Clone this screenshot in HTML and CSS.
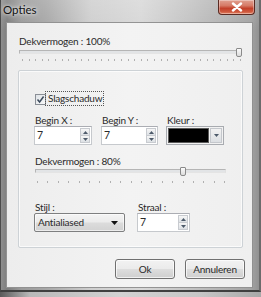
FILE: index.html
```html
<!DOCTYPE html>
<html>
<head>
<meta charset="utf-8">
<link rel="stylesheet" href="styles.css">
</head>
<body>
<div class="window">
  <div class="titlebar">
    <span class="title">Opties</span>
    <div class="close">
      <svg width="12" height="10" viewBox="0 0 12 10"><path d="M2 1.5 L10 8.5 M10 1.5 L2 8.5" stroke="#fff" stroke-width="2.4" stroke-linecap="round"/></svg>
    </div>
  </div>
  <div class="client">
    <div class="label">Dekvermogen : 100%</div>
    <div class="slider slider-wide">
      <div class="track"></div>
      <div class="thumb" style="left: 217px"></div>
      <div class="ticks"></div>
    </div>

    <div class="group">
      <div class="check-row">
        <span class="checkbox">
          <svg width="9" height="9" viewBox="0 0 9 9"><path d="M1.5 4.5 L3.6 7 L7.6 1.5" fill="none" stroke="#3b4a5c" stroke-width="1.5"/></svg>
        </span>
        <span class="check-label">Slagschaduw</span>
      </div>

      <div class="row-grid">
        <div class="field">
          <div class="flabel">Begin X :</div>
          <div class="spin spin-x">
            <span class="val">7</span>
            <span class="spin-btns">
              <span class="sb"><svg width="5" height="3" viewBox="0 0 5 3"><path d="M0 3 L2.5 0 L5 3Z" fill="#4d5a6a"/></svg></span>
              <span class="sb"><svg width="5" height="3" viewBox="0 0 5 3"><path d="M0 0 L2.5 3 L5 0Z" fill="#4d5a6a"/></svg></span>
            </span>
          </div>
        </div>
        <div class="field">
          <div class="flabel">Begin Y :</div>
          <div class="spin spin-y">
            <span class="val">7</span>
            <span class="spin-btns">
              <span class="sb"><svg width="5" height="3" viewBox="0 0 5 3"><path d="M0 3 L2.5 0 L5 3Z" fill="#4d5a6a"/></svg></span>
              <span class="sb"><svg width="5" height="3" viewBox="0 0 5 3"><path d="M0 0 L2.5 3 L5 0Z" fill="#4d5a6a"/></svg></span>
            </span>
          </div>
        </div>
        <div class="field">
          <div class="flabel">Kleur :</div>
          <div class="color-pick">
            <span class="swatch"></span>
            <span class="color-btn"><svg width="5" height="3" viewBox="0 0 5 3"><path d="M0 0 L2.5 3 L5 0Z" fill="#4d5a6a"/></svg></span>
          </div>
        </div>
      </div>

      <div class="label label-inner">Dekvermogen : 80%</div>
      <div class="slider slider-inner">
        <div class="track"></div>
        <div class="thumb" style="left: 145px"></div>
        <div class="ticks"></div>
      </div>

      <div class="row-grid2">
        <div class="field">
          <div class="flabel">Stijl :</div>
          <div class="combo">
            <span class="combo-text">Antialiased</span>
            <svg width="7" height="4" viewBox="0 0 7 4"><path d="M0 0 L3.5 4 L7 0Z" fill="#111"/></svg>
          </div>
        </div>
        <div class="field">
          <div class="flabel">Straal :</div>
          <div class="spin spin-r">
            <span class="val">7</span>
            <span class="spin-btns">
              <span class="sb"><svg width="5" height="3" viewBox="0 0 5 3"><path d="M0 3 L2.5 0 L5 3Z" fill="#4d5a6a"/></svg></span>
              <span class="sb"><svg width="5" height="3" viewBox="0 0 5 3"><path d="M0 0 L2.5 3 L5 0Z" fill="#4d5a6a"/></svg></span>
            </span>
          </div>
        </div>
      </div>
    </div>

    <div class="buttons">
      <button class="btn">Ok</button>
      <button class="btn">Annuleren</button>
    </div>
  </div>
</div>
</body>
</html>
```

FILE: styles.css
```css
html, body {
  margin: 0;
  padding: 0;
}
body {
  width: 261px;
  height: 297px;
  overflow: hidden;
  background: linear-gradient(to right, #5a5a5a 0, #b9b9b9 30px, #d2d2d2 120px, #c6c6c6 200px, #a8a8a8 261px);
  font-family: "Lato", "Open Sans", sans-serif;
  font-size: 10px;
  letter-spacing: -0.2px;
  color: #2a2a2a;
}
.window {
  width: 261px;
  height: 292px;
  box-sizing: border-box;
  border-left: 1px solid #4b4b4b;
  border-right: 2px solid #6b6b6b;
  border-bottom: 2px solid #3f3f3f;
  background:
    linear-gradient(to bottom, rgba(255,255,255,0.15), rgba(255,255,255,0) 30px),
    linear-gradient(to right, #8e8e8e 0, #7d7d7d 6px, #9a9a9a 20px, #a7a7a7 45px, #cfcfcf 90px, #d8d8d8 140px, #c2c2c2 190px, #b1b1b1 225px, #a3a3a3 250px, #8b8b8b 261px);
}
.titlebar {
  height: 22px;
  display: flex;
  align-items: flex-start;
}
.title {
  padding-left: 2px;
  padding-top: 3px;
  font-size: 11.5px;
  letter-spacing: 0;
  line-height: 14px;
  color: #111;
  text-shadow: 0 0 6px rgba(255,255,255,0.9), 0 0 3px rgba(255,255,255,0.8);
}
.close {
  margin-left: auto;
  margin-right: 4px;
  width: 37px;
  height: 15px;
  box-sizing: border-box;
  border: 1px solid #5a2a22;
  border-top: none;
  border-radius: 0 0 4px 4px;
  background: linear-gradient(to bottom, #e0a090 0, #d67a66 40%, #c2402a 60%, #cf5a3e 85%, #e58b6c 100%);
  box-shadow: inset 0 0 0 1px rgba(255,255,255,0.35);
  display: flex;
  align-items: center;
  justify-content: center;
}
.close svg {
  margin-top: -1px;
}
.client {
  margin-left: 5px;
  width: 247px;
  height: 266px;
  box-sizing: border-box;
  border: 1px solid rgba(70,70,70,0.55);
  background: linear-gradient(to right, #ededed, #f3f3f3 50%, #efefef);
  padding: 12px 0 0 12px;
}
.label {
  line-height: 13px;
  height: 13px;
  white-space: nowrap;
}
.slider {
  position: relative;
}
.slider .track {
  height: 4px;
  box-sizing: border-box;
  border: 1px solid #b5b5b5;
  border-right-color: #e0e0e0;
  border-bottom-color: #e4e4e4;
  background: #e2e4e6;
}
.slider .thumb {
  position: absolute;
  top: 0;
  width: 6px;
  height: 9px;
  box-sizing: border-box;
  border: 1px solid #8a8a8a;
  border-radius: 1px 1px 2px 2px;
  background: linear-gradient(to bottom, #fbfbfb, #dcdcdc);
}
.slider .ticks {
  height: 2px;
}
.slider-wide {
  width: 223px;
  height: 14px;
  padding-top: 2px;
  box-sizing: border-box;
}
.slider-wide .ticks {
  margin-top: 5px;
  margin-left: 3px;
  width: 219px;
  background: repeating-linear-gradient(to right, #b0b0b0 0, #b0b0b0 1px, transparent 1px, transparent 6.6px);
}
.group {
  margin-top: 8px;
  margin-left: -1px;
  width: 225px;
  height: 178px;
  box-sizing: border-box;
  border: 1px solid #cdd2d6;
  border-radius: 2px;
  box-shadow: inset 0 0 0 1px rgba(255,255,255,0.7);
  padding: 21px 0 0 15px;
}
.check-row {
  height: 14px;
  display: flex;
  align-items: flex-start;
}
.checkbox {
  margin-top: 2px;
  margin-left: 1px;
  width: 11px;
  height: 11px;
  box-sizing: border-box;
  border: 1px solid #8a8f96;
  background: linear-gradient(135deg, #dfe3e7, #f8f8f8);
  display: flex;
  align-items: center;
  justify-content: center;
}
.check-label {
  margin-left: 0;
  padding: 0 1px 0 2px;
  height: 13px;
  line-height: 13px;
  outline: 1px dotted #555;
  outline-offset: 0;
}
.row-grid {
  margin-top: 8px;
  display: grid;
  grid-template-columns: 67px 65px auto;
}
.flabel {
  height: 12px;
  line-height: 12px;
  padding-left: 1px;
  white-space: nowrap;
}
.spin {
  height: 19px;
  box-sizing: border-box;
  border: 1px solid #c6c9cd;
  border-top-color: #abadb3;
  background: #fff;
  display: flex;
  align-items: stretch;
}
.spin-x { width: 58px; }
.spin-y { width: 57px; }
.spin-r { width: 53px; }
.val {
  flex: 1;
  padding-left: 2px;
  line-height: 17px;
  font-size: 10.5px;
}
.spin-btns {
  width: 10px;
  margin: 1px 1px 1px 0;
  display: flex;
  flex-direction: column;
}
.sb {
  flex: 1;
  box-sizing: border-box;
  border: 1px solid #c8cbd0;
  background: linear-gradient(to bottom, #f6f6f6, #dde1e5);
  display: flex;
  align-items: center;
  justify-content: center;
}
.sb + .sb {
  border-top: none;
}
.color-pick {
  width: 58px;
  height: 19px;
  box-sizing: border-box;
  border: 1px solid #a8abb0;
  background: #f2f2f2;
  display: flex;
  align-items: stretch;
  padding: 1px;
  gap: 1px;
}
.swatch {
  flex: 1;
  background: #000;
  border: 1px solid #5a5a5a;
}
.color-btn {
  width: 10px;
  border: 1px solid #c4c7cc;
  background: linear-gradient(to bottom, #f2f2f2, #dcdfe3);
  display: flex;
  align-items: center;
  justify-content: center;
}
.label-inner {
  margin-top: 10px;
  padding-left: 1px;
}
.slider-inner {
  margin-left: 1px;
  width: 191px;
  height: 16px;
  padding-top: 1px;
  box-sizing: border-box;
}
.slider-inner .thumb {
  top: -1px;
}
.slider-inner .ticks {
  margin-top: 8px;
  margin-left: 2px;
  width: 188px;
  background: repeating-linear-gradient(to right, #b0b0b0 0, #b0b0b0 1px, transparent 1px, transparent 10.4px);
}
.row-grid2 {
  margin-top: 17px;
  display: grid;
  grid-template-columns: 103px auto;
}
.combo {
  width: 91px;
  height: 19px;
  box-sizing: border-box;
  border: 1px solid #7e7f80;
  border-radius: 2px;
  background: linear-gradient(to bottom, #f4f4f4 0, #ebebeb 48%, #dcdcdc 52%, #d2d2d2 100%);
  box-shadow: inset 0 0 0 1px rgba(255,255,255,0.6);
  display: flex;
  align-items: center;
  padding: 0 6px 0 3px;
}
.combo-text {
  flex: 1;
  line-height: 17px;
}
.buttons {
  margin-top: 11px;
  display: flex;
  gap: 10px;
  padding-left: 96px;
}
.btn {
  width: 60px;
  height: 20px;
  margin: 0;
  padding: 0;
  box-sizing: border-box;
  border: 1px solid #707070;
  border-radius: 3px;
  background: linear-gradient(to bottom, #f2f2f2 0, #ebebeb 48%, #dddddd 52%, #cfcfcf 100%);
  box-shadow: inset 0 0 0 1px rgba(255,255,255,0.7);
  font-family: "Lato", "Open Sans", sans-serif;
  font-size: 10px;
  letter-spacing: -0.2px;
  color: #2a2a2a;
  line-height: 16px;
}
```
